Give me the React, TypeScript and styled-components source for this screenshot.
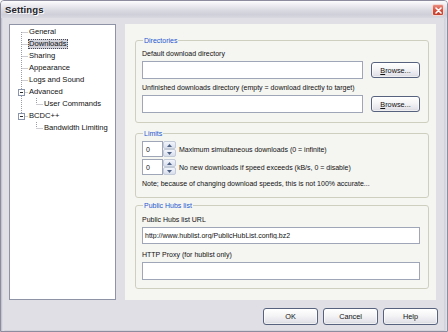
import React from 'react';
import styled, { createGlobalStyle } from 'styled-components';

const Global = createGlobalStyle`
  html, body { margin: 0; padding: 0; background: #ffffff; }
  body { font-family: "Liberation Sans", Arial, sans-serif; font-size: 7px; color: #111111; }
  * { box-sizing: border-box; }
`;

const Window = styled.div`
  width: 448px;
  height: 332px;
  display: flex;
  flex-direction: column;
  background: linear-gradient(90deg, #b9b9c6 0px, #e4e4ea 2px, #d3d3dc 4px, #d3d3dc 444px, #e4e4ea 446px, #b9b9c6 448px);
  border: 1px solid #8c8c9e;
  border-radius: 4px 4px 0 0;
  overflow: hidden;
`;

const TitleBar = styled.div`
  height: 17px;
  flex: none;
  display: flex;
  align-items: center;
  justify-content: space-between;
  padding: 0 3px 0 4px;
  background: linear-gradient(180deg, #fdfdfe 0%, #ececf1 25%, #dadae2 55%, #cfcfd9 80%, #d9d9e1 100%);
`;

const Title = styled.span`
  font-size: 9.6px;
  font-weight: bold;
  color: #24242a;
  text-shadow: 1px 1px 0 #ffffff;
  letter-spacing: 0.1px;
`;

const CloseButton = styled.div`
  width: 12px;
  height: 12px;
  border-radius: 2px;
  border: 1px solid #f3d8d4;
  background: linear-gradient(180deg, #e98c7f 0%, #d5513f 55%, #c0402f 100%);
  display: flex;
  align-items: center;
  justify-content: center;
  margin-top: 1px;
`;

const Client = styled.div`
  flex: 1;
  margin: 0 3px 1px 3px;
  background: #dfdfe5;
  display: flex;
  flex-direction: column;
  padding: 6px 6px 5px 5px;
`;

const Main = styled.div`
  display: flex;
  gap: 9px;
  height: 276px;
  padding-right: 2px;
`;

const Tree = styled.div`
  width: 107px;
  height: 100%;
  background: #ffffff;
  border: 1px solid #8e93a6;
  padding: 1px 0 0 3px;
`;

const Row = styled.div`
  display: flex;
  align-items: center;
  height: 12px;
`;

const Label = styled.span<{ $selected?: boolean }>`
  height: 10px;
  line-height: 10px;
  padding: 0 1px;
  font-size: 7.6px;
  white-space: nowrap;
  color: #111111;
  background: ${(p) => (p.$selected ? '#d3d3db' : 'transparent')};
  outline: ${(p) => (p.$selected ? '1px dotted #4a4a55' : 'none')};
  outline-offset: -1px;
`;

const Panel = styled.div`
  width: 311px;
  height: 100%;
  background: #f5f5f2;
  padding: 12px 7px 0 10px;
  display: flex;
  flex-direction: column;
`;

const Group = styled.fieldset<{ $gap?: number }>`
  margin: ${(p) => p.$gap ?? 0}px 0 0 0;
  padding: 0 8px 0 6px;
  border: 1px solid #cfcfbf;
  border-radius: 3px;
  min-width: 0;
`;

const Legend = styled.legend`
  font-size: 7px;
  line-height: 9px;
  color: #1f58cf;
  padding: 0 1px;
  margin-left: 1px;
`;

const GroupBody = styled.div<{ $top: number; $bottom: number }>`
  display: flex;
  flex-direction: column;
  padding: ${(p) => p.$top}px 0 ${(p) => p.$bottom}px 0;
`;

const FieldLabel = styled.div<{ $gap?: number }>`
  line-height: 10px;
  height: 10px;
  font-size: 7px;
  margin-top: ${(p) => p.$gap ?? 0}px;
  margin-bottom: 2px;
  white-space: nowrap;
`;

const FieldRow = styled.div`
  display: flex;
  align-items: center;
  gap: 8px;
`;

const TextBox = styled.input<{ $h?: number }>`
  flex: 1;
  min-width: 0;
  height: ${(p) => p.$h ?? 18}px;
  border: 1px solid #9ea6b8;
  background: #ffffff;
  font-family: "Liberation Sans", Arial, sans-serif;
  font-size: 7px;
  color: #111111;
  padding: 0 2px;
  margin: 0;
  outline: none;
`;

const PushButton = styled.button<{ $w: number; $h: number }>`
  width: ${(p) => p.$w}px;
  height: ${(p) => p.$h}px;
  flex: none;
  padding: 0;
  margin: 0;
  border: 1px solid #56627e;
  border-radius: 3px;
  background: linear-gradient(180deg, #ffffff 0%, #f4f4f6 45%, #e3e3ea 85%, #d2d2da 100%);
  font-family: "Liberation Sans", Arial, sans-serif;
  font-size: 7.3px;
  color: #111111;
  box-shadow: inset 0 0 0 1px rgba(255, 255, 255, 0.6);
  display: flex;
  align-items: center;
  justify-content: center;
`;

const SpinRow = styled.div<{ $gap?: number }>`
  display: flex;
  align-items: center;
  height: 16px;
  margin-top: ${(p) => p.$gap ?? 0}px;
`;

const SpinEdit = styled.div`
  width: 21px;
  height: 16px;
  border: 1px solid #9ea6b8;
  background: #ffffff;
  display: flex;
  align-items: center;
  padding-left: 3px;
  font-size: 7px;
`;

const SpinButtons = styled.div`
  width: 13px;
  height: 16px;
  display: flex;
  flex-direction: column;
  margin-right: 3px;
`;

const SpinBtn = styled.div`
  flex: 1;
  border: 1px solid #c3cad8;
  border-radius: 2px;
  background: linear-gradient(180deg, #f3f5fb 0%, #d8deeb 100%);
  display: flex;
  align-items: center;
  justify-content: center;
`;

const SpinText = styled.span`
  font-size: 7px;
  white-space: nowrap;
`;

const Note = styled.div`
  font-size: 7px;
  line-height: 10px;
  margin-top: 4px;
  white-space: nowrap;
`;

const ButtonBar = styled.div`
  display: flex;
  justify-content: flex-end;
  gap: 5px;
  margin-top: 8px;
`;

type Guide = { v: 'full' | 'top' | 'bottom' | 'none'; h: boolean; box?: boolean };

const GuideCell: React.FC<Guide> = ({ v, h, box }) => (
  <svg width="15" height="12" viewBox="0 0 15 12" style={{ flex: 'none', display: 'block' }}>
    {v !== 'none' && (
      <line
        x1="8.5"
        x2="8.5"
        y1={v === 'bottom' ? 6 : 0}
        y2={v === 'top' ? 6 : 12}
        stroke="#9c9ca4"
        strokeDasharray="1 1"
      />
    )}
    {h && <line x1="8.5" x2="15" y1="6.5" y2="6.5" stroke="#9c9ca4" strokeDasharray="1 1" />}
    {box && (
      <>
        <rect x="5.5" y="3.5" width="6" height="6" fill="#ffffff" stroke="#8a94ab" />
        <line x1="7" x2="10" y1="6.5" y2="6.5" stroke="#2a2a2a" />
      </>
    )}
  </svg>
);

type Item = { label: string; guides: Guide[]; selected?: boolean };

const items: Item[] = [
  { label: 'General', guides: [{ v: 'bottom', h: true }] },
  { label: 'Downloads', guides: [{ v: 'full', h: true }], selected: true },
  { label: 'Sharing', guides: [{ v: 'full', h: true }] },
  { label: 'Appearance', guides: [{ v: 'full', h: true }] },
  { label: 'Logs and Sound', guides: [{ v: 'full', h: true }] },
  { label: 'Advanced', guides: [{ v: 'full', h: true, box: true }] },
  { label: 'User Commands', guides: [{ v: 'full', h: false }, { v: 'top', h: true }] },
  { label: 'BCDC++', guides: [{ v: 'top', h: true, box: true }] },
  { label: 'Bandwidth Limiting', guides: [{ v: 'none', h: false }, { v: 'top', h: true }] },
];

const Arrow: React.FC<{ up?: boolean }> = ({ up }) => (
  <svg width="5" height="3" viewBox="0 0 5 3" style={{ display: 'block' }}>
    <path d={up ? 'M0 3 L2.5 0 L5 3 Z' : 'M0 0 L2.5 3 L5 0 Z'} fill="#4d6185" />
  </svg>
);

const Spinner: React.FC<{ value: string }> = ({ value }) => (
  <>
    <SpinEdit>{value}</SpinEdit>
    <SpinButtons>
      <SpinBtn>
        <Arrow up />
      </SpinBtn>
      <SpinBtn>
        <Arrow />
      </SpinBtn>
    </SpinButtons>
  </>
);

const Browse: React.FC = () => (
  <PushButton $w={49} $h={16}>
    <span>
      <u>B</u>rowse...
    </span>
  </PushButton>
);

export default function App() {
  return (
    <>
      <Global />
      <Window>
        <TitleBar>
          <Title>Settings</Title>
          <CloseButton>
            <svg width="7" height="7" viewBox="0 0 7 7">
              <path d="M1 1 L6 6 M6 1 L1 6" stroke="#ffffff" strokeWidth="1.6" strokeLinecap="round" />
            </svg>
          </CloseButton>
        </TitleBar>
        <Client>
          <Main>
            <Tree>
              {items.map((it) => (
                <Row key={it.label}>
                  {it.guides.map((g, i) => (
                    <GuideCell key={i} {...g} />
                  ))}
                  <Label $selected={it.selected}>{it.label}</Label>
                </Row>
              ))}
            </Tree>
            <Panel>
              <Group>
                <Legend>Directories</Legend>
                <GroupBody $top={4} $bottom={9}>
                  <FieldLabel>Default download directory</FieldLabel>
                  <FieldRow>
                    <TextBox readOnly defaultValue="" />
                    <Browse />
                  </FieldRow>
                  <FieldLabel $gap={4}>Unfinished downloads directory (empty = download directly to target)</FieldLabel>
                  <FieldRow>
                    <TextBox readOnly defaultValue="" />
                    <Browse />
                  </FieldRow>
                </GroupBody>
              </Group>
              <Group $gap={6}>
                <Legend>Limits</Legend>
                <GroupBody $top={3} $bottom={8}>
                  <SpinRow>
                    <Spinner value="0" />
                    <SpinText>Maximum simultaneous downloads (0 = infinite)</SpinText>
                  </SpinRow>
                  <SpinRow $gap={2}>
                    <Spinner value="0" />
                    <SpinText>No new downloads if speed exceeds (kB/s, 0 = disable)</SpinText>
                  </SpinRow>
                  <Note>Note; because of changing download speeds, this is not 100% accurate...</Note>
                </GroupBody>
              </Group>
              <Group $gap={3}>
                <Legend>Public Hubs list</Legend>
                <GroupBody $top={5} $bottom={8}>
                  <FieldLabel>Public Hubs list URL</FieldLabel>
                  <FieldRow>
                    <TextBox $h={17} readOnly defaultValue="http://www.hublist.org/PublicHubList.config.bz2" />
                  </FieldRow>
                  <FieldLabel $gap={6}>HTTP Proxy (for hublist only)</FieldLabel>
                  <FieldRow>
                    <TextBox $h={18} readOnly defaultValue="" />
                  </FieldRow>
                </GroupBody>
              </Group>
            </Panel>
          </Main>
          <ButtonBar>
            <PushButton $w={55} $h={17}>OK</PushButton>
            <PushButton $w={55} $h={17}>Cancel</PushButton>
            <PushButton $w={55} $h={17}>Help</PushButton>
          </ButtonBar>
        </Client>
      </Window>
    </>
  );
}
